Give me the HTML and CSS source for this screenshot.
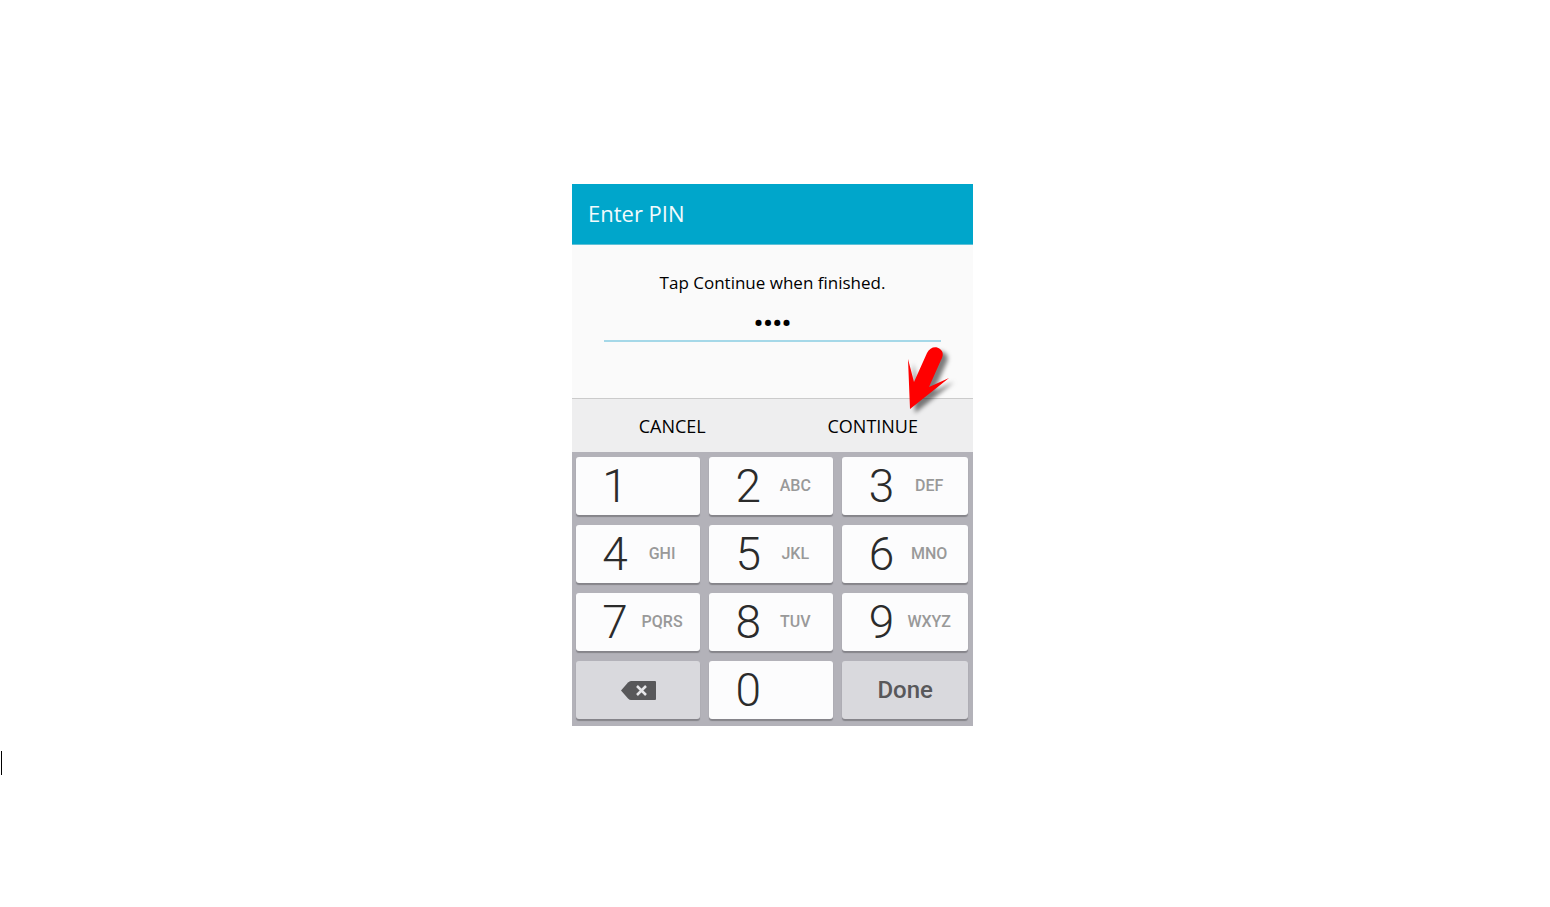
FILE: index.html
```html
<!DOCTYPE html>
<html lang="en">
<head>
<meta charset="utf-8">
<meta name="viewport" content="width=device-width, initial-scale=1">
<title>Enter PIN</title>
<link rel="stylesheet" href="styles.css">
</head>
<body>
<main class="page">
  <section class="phone">
    <header class="title-bar"><h1 class="title">Enter PIN</h1></header>
    <form class="pin-form">
      <div class="entry">
        <label class="hint" for="pin">Tap Continue when finished.</label>
        <input class="pin" id="pin" type="password" value="1234">
      </div>
      <div class="actions">
        <button class="action" type="button">CANCEL</button>
        <button class="action" type="button">CONTINUE</button>
        <svg class="pointer" viewBox="0 0 50 74" aria-hidden="true">
          <path d="M9 65 L7 15 L13 38 L26 9 C29 3 35 2 39 5 C43 8 42 12 40 16 L28 43 L48 34 Z" fill="#ff0000"/>
        </svg>
      </div>
    </form>
    <div class="keypad">
      <button class="key" type="button"><span class="digit">1</span></button>
      <button class="key" type="button"><span class="digit">2</span><span class="letters">ABC</span></button>
      <button class="key" type="button"><span class="digit">3</span><span class="letters">DEF</span></button>
      <button class="key" type="button"><span class="digit">4</span><span class="letters">GHI</span></button>
      <button class="key" type="button"><span class="digit">5</span><span class="letters">JKL</span></button>
      <button class="key" type="button"><span class="digit">6</span><span class="letters">MNO</span></button>
      <button class="key" type="button"><span class="digit">7</span><span class="letters">PQRS</span></button>
      <button class="key" type="button"><span class="digit">8</span><span class="letters">TUV</span></button>
      <button class="key" type="button"><span class="digit">9</span><span class="letters">WXYZ</span></button>
      <button class="key key-grey" type="button" aria-label="Delete">
        <svg class="delete-icon" viewBox="0 0 35 19" aria-hidden="true">
          <path d="M0 9.500 L7 1.500 Q8.500 0 10 0 H34 Q35 0 35 1 V18 Q35 19 34 19 H10 Q8.500 19 7 17.500 Z" fill="#58585a"/>
          <path d="M16 5 L25 14 M25 5 L16 14" stroke="#e6e6e9" stroke-width="2.500" fill="none"/>
        </svg>
      </button>
      <button class="key" type="button"><span class="digit">0</span></button>
      <button class="key key-grey" type="button">Done</button>
    </div>
  </section>
  <div class="caret"></div>
</main>
</body>
</html>
```
FILE: styles.css
```css
* {
  box-sizing: border-box;
}

body {
  margin: 0;
  background: #fff;
  color: #000;
  font-family: "Open Sans", "Noto Sans", sans-serif;
}

button,
input {
  margin: 0;
  padding: 0;
  border: 0;
  font: inherit;
  color: inherit;
}

.page {
  min-height: 100vh;
  padding: 3px 5px 0 0;
  display: grid;
  grid-template-rows: 1fr auto 1fr;
}

.phone {
  grid-row: 2;
  justify-self: center;
  width: 100%;
  max-width: 401px;
  background: #fafafa;
}

.title-bar {
  padding: 14px 16px 16px;
  background: #00a6cb;
  border-bottom: 1px solid #5fc0d6;
}

.title {
  margin: 0;
  font-size: 22px;
  line-height: 30px;
  font-weight: 400;
  color: #f2fbfd;
}

.entry {
  padding: 26px 32px 56px;
  display: flex;
  flex-direction: column;
  text-align: center;
}

.hint {
  font-size: 17px;
  line-height: 24px;
}

.pin {
  height: 47px;
  padding-top: 10px;
  border-bottom: 2px solid #a5d8e8;
  background: transparent;
  font-family: Roboto, sans-serif;
  font-size: 26px;
  font-weight: 700;
  text-align: center;
  color: #000;
  outline: none;
}

.actions {
  position: relative;
  display: grid;
  grid-template-columns: 1fr 1fr;
  border-top: 1px solid #cbcbcb;
  background: #eeeeef;
}

.action {
  height: 53px;
  background: transparent;
  font-size: 18px;
}

.pointer {
  position: absolute;
  right: 22px;
  bottom: 34px;
  width: 50px;
  height: 74px;
  overflow: visible;
  filter: drop-shadow(5px 4px 2px rgb(0 0 0 / 50%));
}

.keypad {
  padding: 5px 5px 7px 4px;
  display: grid;
  grid-template-columns: repeat(3, 1fr);
  gap: 10px 9px;
  background: #b3b2b9;
  font-family: Roboto, sans-serif;
}

.key {
  height: 58px;
  padding: 0 17px 1px 13px;
  display: grid;
  grid-template-columns: 52px 1fr;
  align-items: center;
  justify-items: center;
  border-radius: 3px;
  background: #fcfcfd;
  box-shadow: 0 2px 1px #85848a;
}

.digit {
  font-size: 46px;
  line-height: 54px;
  font-weight: 350;
  color: #2b2b2b;
}

.letters {
  font-size: 16px;
  font-weight: 500;
  color: #999;
}

.key-grey {
  padding: 0;
  grid-template-columns: 1fr;
  background: #d9d9dd;
  font-size: 24px;
  font-weight: 500;
  color: #58585a;
}

.delete-icon {
  width: 35px;
  height: 19px;
}

.caret {
  grid-row: 3;
  width: 1px;
  height: 24px;
  margin: 25px 0 0 1px;
  background: #000;
}
```
